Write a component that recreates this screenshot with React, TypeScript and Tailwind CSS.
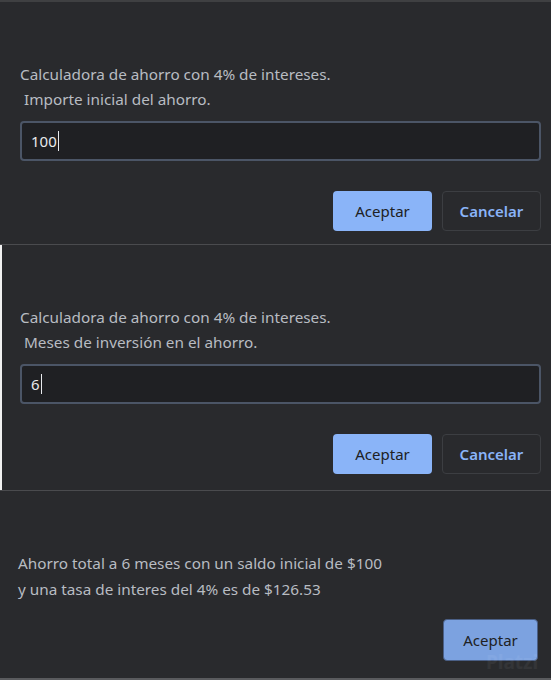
import React from 'react';

const font = { fontFamily: '"Noto Sans", "Open Sans", sans-serif' };

function PromptDialog({ message, value, last }: { message: string; value: string; last?: boolean }) {
  return (
    <div
      className={`relative bg-[#292a2d] pl-5 pr-[10px] pt-[60px] ${last ? 'pb-4' : 'pb-[13px]'} border-b border-[#4a4b4e]`}
    >
      {last && <span className="absolute left-0 top-0 h-full w-[2px] bg-[#f1f1f1]" />}
      <div className="text-[15.3px] leading-[25px] text-[#b8bcc2]">
        <div>Calculadora de ahorro con 4% de intereses.</div>
        <div className="whitespace-pre"> {message}</div>
      </div>
      <div className="mt-[9px] flex h-10 items-center rounded-[4px] border-2 border-[#4b5566] bg-[#1f2023] px-[9px]">
        <span className="text-[15px] text-[#e8eaed]">{value}</span>
        <span className="ml-px h-[20px] w-px bg-[#e8eaed]" />
      </div>
      <div className="mt-[30px] flex justify-end gap-[10px]">
        <button className="h-10 w-[99px] rounded-[4px] bg-[#8ab4f8] text-[15px] text-[#202124]">
          Aceptar
        </button>
        <button className="h-10 w-[99px] rounded-[4px] border border-[#3c3e42] bg-[#292a2d] text-[15px] font-semibold text-[#8ab4f8]">
          Cancelar
        </button>
      </div>
    </div>
  );
}

export default function App() {
  return (
    <div className="h-[680px] w-[551px] overflow-hidden bg-[#292a2d]" style={font}>
      <div className="h-[2px] bg-[#3f4042]" />
      <PromptDialog message="Importe inicial del ahorro." value="100" />
      <PromptDialog message="Meses de inversión en el ahorro." value="6" last />

      {/* Result alert */}
      <div className="relative h-[187px] bg-[#292a2d] pl-[18px] pr-[13px] pt-[59px]">
        <div className="text-[15.3px] leading-[26px] text-[#b8bcc2]">
          <div>Ahorro total a 6 meses con un saldo inicial de $100</div>
          <div>y una tasa de interes del 4% es de $126.53</div>
        </div>
        <div className="mt-[17px] flex justify-end">
          <button className="h-[42px] w-[95px] rounded-[4px] border border-[#4a5f86] bg-[#7ca2e0] text-[15px] text-[#202124]">
            Aceptar
          </button>
        </div>
        <span className="pointer-events-none absolute left-[486px] top-[162px] text-[19px] font-bold leading-none text-white/[0.05]">
          Platzi
        </span>
      </div>
      <div className="h-[2px] bg-[#5a5b5e]" />
    </div>
  );
}
